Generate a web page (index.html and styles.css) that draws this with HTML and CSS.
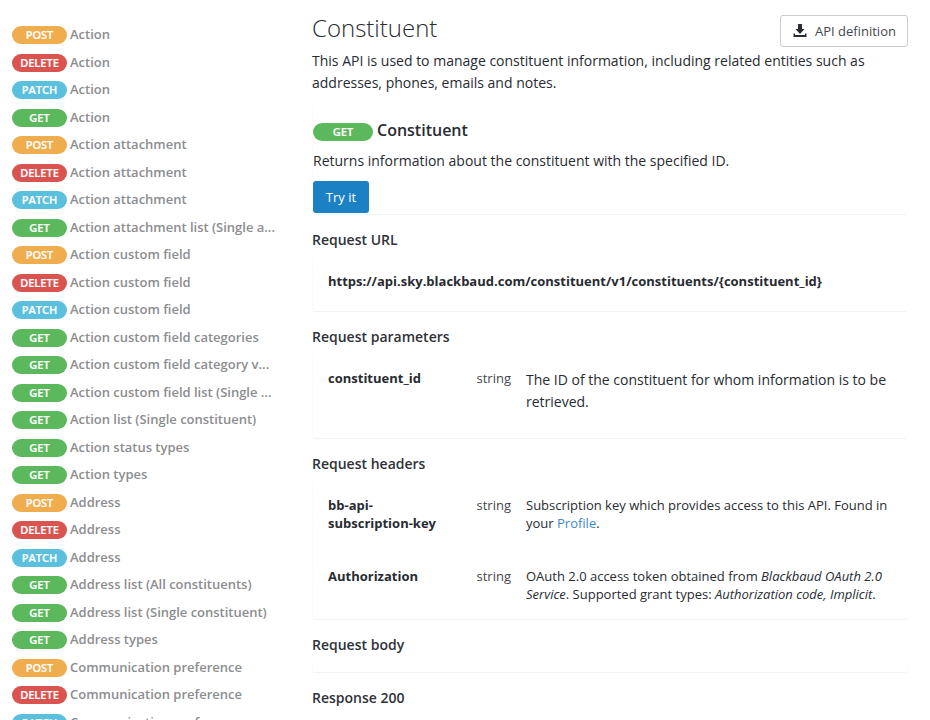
FILE: index.html
```html
<!DOCTYPE html>
<html lang="en">
<head>
<meta charset="utf-8">
<title>Constituent API</title>
<link rel="stylesheet" href="styles.css">
</head>
<body>
<div class="page">
<nav class="sidebar">
<a class="op"><span class="badge post">POST</span><span class="name">Action</span></a>
<a class="op"><span class="badge delete">DELETE</span><span class="name">Action</span></a>
<a class="op"><span class="badge patch">PATCH</span><span class="name">Action</span></a>
<a class="op"><span class="badge get">GET</span><span class="name">Action</span></a>
<a class="op"><span class="badge post">POST</span><span class="name">Action attachment</span></a>
<a class="op"><span class="badge delete">DELETE</span><span class="name">Action attachment</span></a>
<a class="op"><span class="badge patch">PATCH</span><span class="name">Action attachment</span></a>
<a class="op"><span class="badge get">GET</span><span class="name">Action attachment list (Single a...</span></a>
<a class="op"><span class="badge post">POST</span><span class="name">Action custom field</span></a>
<a class="op"><span class="badge delete">DELETE</span><span class="name">Action custom field</span></a>
<a class="op"><span class="badge patch">PATCH</span><span class="name">Action custom field</span></a>
<a class="op"><span class="badge get">GET</span><span class="name">Action custom field categories</span></a>
<a class="op"><span class="badge get">GET</span><span class="name">Action custom field category v...</span></a>
<a class="op"><span class="badge get">GET</span><span class="name">Action custom field list (Single ...</span></a>
<a class="op"><span class="badge get">GET</span><span class="name">Action list (Single constituent)</span></a>
<a class="op"><span class="badge get">GET</span><span class="name">Action status types</span></a>
<a class="op"><span class="badge get">GET</span><span class="name">Action types</span></a>
<a class="op"><span class="badge post">POST</span><span class="name">Address</span></a>
<a class="op"><span class="badge delete">DELETE</span><span class="name">Address</span></a>
<a class="op"><span class="badge patch">PATCH</span><span class="name">Address</span></a>
<a class="op"><span class="badge get">GET</span><span class="name">Address list (All constituents)</span></a>
<a class="op"><span class="badge get">GET</span><span class="name">Address list (Single constituent)</span></a>
<a class="op"><span class="badge get">GET</span><span class="name">Address types</span></a>
<a class="op"><span class="badge post">POST</span><span class="name">Communication preference</span></a>
<a class="op"><span class="badge delete">DELETE</span><span class="name">Communication preference</span></a>
<a class="op"><span class="badge patch">PATCH</span><span class="name">Communication preference</span></a>
</nav>
<main class="content">
<header class="head">
<h1>Constituent</h1>
<button class="definition"><svg class="icon" viewBox="0 0 14 14"><path d="M5 0h4v5h2.500L7 10 2.500 5H5zM.500 9.500H2V11h10V9.500h1.500V13H.500z"/></svg>API definition</button>
</header>
<p class="intro">This API is used to manage constituent information, including related entities such as addresses, phones, emails and notes.</p>
<section class="operation card">
<h2><span class="badge get wide">GET</span><span class="title">Constituent</span></h2>
<p>Returns information about the constituent with the specified ID.</p>
<button class="try">Try it</button>
</section>
<h3>Request URL</h3>
<section class="url card"><div class="address">https://api.sky.blackbaud.com/constituent/v1/constituents/{constituent_id}</div></section>
<h3>Request parameters</h3>
<section class="params card">
<div class="row"><b>constituent_id</b><span class="type">string</span><p class="large">The ID of the constituent for whom information is to be retrieved.</p></div></section>
<h3>Request headers</h3>
<section class="headers card">
<div class="row first"><b>bb-api-<br>subscription-key</b><span class="type">string</span><p>Subscription key which provides access to this API. Found in your <a>Profile</a>.</p></div>
<div class="row"><b>Authorization</b><span class="type">string</span><p>OAuth 2.0 access token obtained from <i>Blackbaud OAuth 2.0 Service</i>. Supported grant types: <i>Authorization code, Implicit</i>.</p></div></section>
<h3>Request body</h3>
<section class="body card"></section>
<h3>Response 200</h3>
</main>
</div>
</body>
</html>
```
FILE: styles.css
```css
* { box-sizing: border-box; }
body { margin: 0; background: #fff; color: #282b31; font: 13px/18px "Open Sans", sans-serif; overflow: hidden; }
h1, h2, h3, p { margin: 0; }
button { font-family: inherit; }
.page { display: grid; grid-template-columns: 312px 596px; height: 720px; }
.sidebar { padding: 20.5px 0 0 12px; height: 720px; overflow: hidden; }
.op { display: flex; height: 27.5px; align-items: center; gap: 3px; white-space: nowrap; }
.name { color: #8c8d90; font-weight: 600; letter-spacing: -0.01px; }
.badge { display: inline-block; width: 55px; height: 18px; border-radius: 9px; color: #fff; font-size: 11px; font-weight: 600; line-height: 18px; text-align: center; position: relative; top: 1px; -webkit-text-stroke: 0.2px #fff; }
.post { background: #f0ad4e; }
.delete { background: #d9534f; }
.patch { background: #5bc0de; }
.get { background: #5cb85c; }
.head { display: flex; justify-content: space-between; height: 50px; padding-top: 15px; }
h1 { font-size: 24px; line-height: 26px; font-weight: 300; }
.definition { width: 128px; height: 32px; border: 1px solid #ccc; border-radius: 3px; background: #fff; color: #45474c; font-size: 13px; display: flex; align-items: center; gap: 8px; padding: 0 12px; white-space: nowrap; }
.icon { width: 14px; height: 14px; flex: none; fill: #282b31; }
.intro { font-size: 14px; line-height: 22px; margin-bottom: 13px; }
.card { border: 1px solid #fbfbfb; border-top: 0; border-bottom-color: #f4f4f5; border-radius: 0 0 3px 3px; }
.operation { height: 108px; padding-top: 11px; }
h2 { display: flex; align-items: center; gap: 4px; font-size: 16px; line-height: 24px; font-weight: 600; }
.title { color: #282b31; }
.wide { width: 60px; top: 2px; }
.operation p { font-size: 14px; line-height: 22px; margin: 8px 0 9px; }
.try { width: 56px; height: 32px; border: 0; border-radius: 3px; background: #1c80c5; color: #fff; font-size: 13px; padding: 0; }
h3 { font-size: 14px; line-height: 20px; font-weight: 600; margin: 15px 0 8px; color: #2f3237; }
.url { height: 54px; padding: 14px 15px 0; }
.address { font-weight: 700; }
.params { height: 84px; padding-top: 14px; }
.row { display: grid; grid-template-columns: 148.500px 49.500px 366px; padding-left: 15px; }
.type { color: #45474c; }
.large { font-size: 14px; line-height: 22px; }
.headers { height: 138px; padding-top: 14px; }
.headers .first { margin-bottom: 35px; }
.row a { color: #428bca; }
.body { height: 10px; }
```
